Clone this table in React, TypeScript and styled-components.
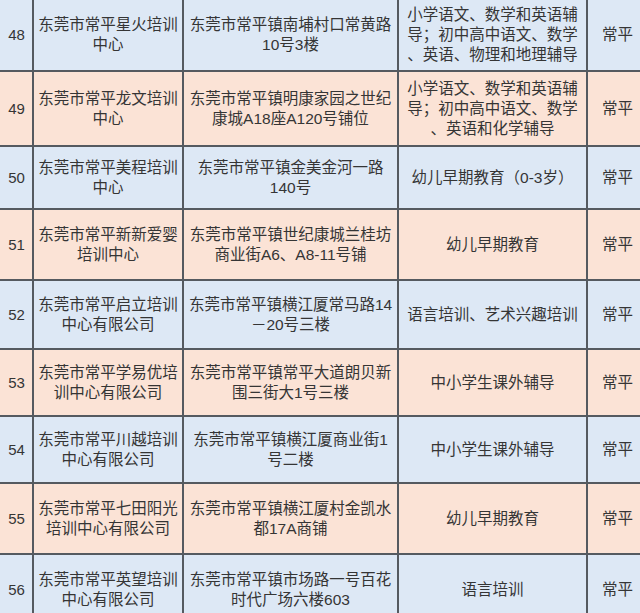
import React from 'react';
import styled, { createGlobalStyle, css } from 'styled-components';

const GlobalStyle = createGlobalStyle`
  html, body {
    margin: 0;
    padding: 0;
    overflow: hidden;
    background: #ffffff;
  }
  * {
    box-sizing: border-box;
  }
`;

type Tone = 'blue' | 'peach';

interface Entry {
  no: number;
  name: string;
  address: string;
  scope: string;
  area: string;
  height: number;
}

const entries: Entry[] = [
  {
    no: 48,
    name: '东莞市常平星火培训\n中心',
    address: '东莞市常平镇南埔村口常黄路\n10号3楼',
    scope: '小学语文、数学和英语辅\n导；初中高中语文、数学\n、英语、物理和地理辅导',
    area: '常平',
    height: 72,
  },
  {
    no: 49,
    name: '东莞市常平龙文培训\n中心',
    address: '东莞市常平镇明康家园之世纪\n康城A18座A120号铺位',
    scope: '小学语文、数学和英语辅\n导；初中高中语文、数学\n、英语和化学辅导',
    area: '常平',
    height: 75,
  },
  {
    no: 50,
    name: '东莞市常平美程培训\n中心',
    address: '东莞市常平镇金美金河一路\n140号',
    scope: '幼儿早期教育（0-3岁）',
    area: '常平',
    height: 63,
  },
  {
    no: 51,
    name: '东莞市常平新新爱婴\n培训中心',
    address: '东莞市常平镇世纪康城兰桂坊\n商业街A6、A8-11号铺',
    scope: '幼儿早期教育',
    area: '常平',
    height: 71,
  },
  {
    no: 52,
    name: '东莞市常平启立培训\n中心有限公司',
    address: '东莞市常平镇横江厦常马路14\n－20号三楼',
    scope: '语言培训、艺术兴趣培训',
    area: '常平',
    height: 69,
  },
  {
    no: 53,
    name: '东莞市常平学易优培\n训中心有限公司',
    address: '东莞市常平镇常平大道朗贝新\n围三街大1号三楼',
    scope: '中小学生课外辅导',
    area: '常平',
    height: 67,
  },
  {
    no: 54,
    name: '东莞市常平川越培训\n中心有限公司',
    address: '东莞市常平镇横江厦商业街1\n号二楼',
    scope: '中小学生课外辅导',
    area: '常平',
    height: 67,
  },
  {
    no: 55,
    name: '东莞市常平七田阳光\n培训中心有限公司',
    address: '东莞市常平镇横江厦村金凯水\n都17A商铺',
    scope: '幼儿早期教育',
    area: '常平',
    height: 71,
  },
  {
    no: 56,
    name: '东莞市常平英望培训\n中心有限公司',
    address: '东莞市常平镇市场路一号百花\n时代广场六楼603',
    scope: '语言培训',
    area: '常平',
    height: 71,
  },
];

const tones: Record<Tone, string> = {
  blue: '#dde8f5',
  peach: '#fbe3d6',
};

const Page = styled.div`
  width: 640px;
  height: 613px;
  overflow: hidden;
`;

const Sheet = styled.div`
  width: 645px;
  display: flex;
  flex-direction: column;
  font-family: 'Liberation Sans', 'Noto Sans CJK SC', sans-serif;
  color: #353535;
`;

const Row = styled.div<{ $tone: Tone; $height: number }>`
  ${({ $tone, $height }) => css`
    display: grid;
    grid-template-columns: 32px 150px 215px 189px 59px;
    height: ${$height}px;
    flex-shrink: 0;
    background: ${tones[$tone]};
    border-bottom: 2px solid #555a60;
  `}
`;

const Cell = styled.div<{ $first?: boolean }>`
  ${({ $first }) => css`
    display: flex;
    align-items: center;
    justify-content: center;
    text-align: center;
    white-space: pre-line;
    font-size: 15.5px;
    line-height: 20px;
    border-left: ${$first ? 'none' : '2px solid #555a60'};
  `}
`;

const NumberCell = styled(Cell)`
  font-family: 'Liberation Sans', Arial, sans-serif;
  font-size: 15px;
  padding-left: 1px;
`;

const AreaCell = styled(Cell)`
  padding-left: 2px;
`;

export default function App() {
  return (
    <>
      <GlobalStyle />
      <Page>
        <Sheet>
          {entries.map((entry, i) => (
            <Row key={entry.no} $tone={i % 2 === 0 ? 'blue' : 'peach'} $height={entry.height}>
              <NumberCell $first>{entry.no}</NumberCell>
              <Cell>{entry.name}</Cell>
              <Cell>{entry.address}</Cell>
              <Cell>{entry.scope}</Cell>
              <AreaCell>{entry.area}</AreaCell>
            </Row>
          ))}
        </Sheet>
      </Page>
    </>
  );
}
